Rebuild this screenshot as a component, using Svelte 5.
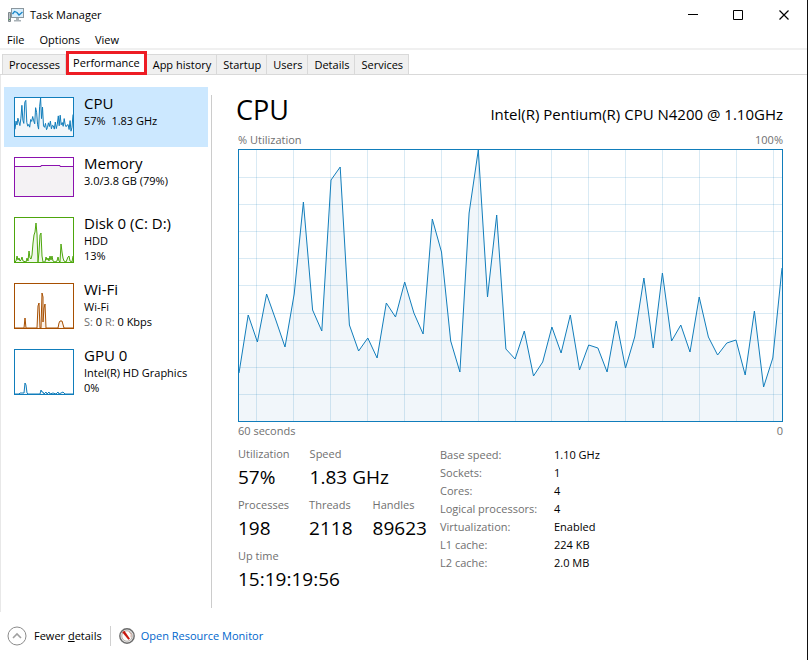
<script>
  let activeTab = 'Performance';
  let activeResource = 'CPU';

  const menus = ['File', 'Options', 'View'];
  const tabs = ['Processes', 'Performance', 'App history', 'Startup', 'Users', 'Details', 'Services'];

  // chart space is 543 x 271, one sample per second, y grows downwards
  const chartWidth = 543;
  const chartHeight = 271;
  const cpuSamples = [
    223, 165, 192, 144, 170, 197, 144, 52, 160, 181, 30, 17, 175, 201, 188,
    208, 153, 167, 132, 163, 184, 69, 102, 191, 222, 63, 0, 147, 65, 199,
    209, 181, 226, 212, 177, 203, 165, 220, 195, 198, 222, 171, 218, 187, 128,
    198, 123, 191, 175, 202, 147, 187, 205, 193, 190, 225, 161, 237, 208, 118
  ];
  const columns = [17, 54, 91, 128, 165, 202, 239, 276, 312, 349, 386, 423, 460, 497, 534];
  const rows = [27, 54, 81, 108, 135, 163, 190, 217, 244];

  const toPoints = (samples, width, height) =>
    samples
      .map((y, i) => `${((i * width) / (samples.length - 1)).toFixed(1)},${((y * height) / chartHeight).toFixed(1)}`)
      .join(' ');

  const cpuLine = toPoints(cpuSamples, chartWidth, chartHeight);

  const resources = [
    {
      name: 'CPU',
      lines: ['57%  1.83 GHz'],
      color: '#117dbb',
      fill: '#f1f6fa',
      height: 38,
      points: toPoints(cpuSamples, 58, 38)
    },
    {
      name: 'Memory',
      lines: ['3.0/3.8 GB (79%)'],
      color: '#8b12ae',
      fill: '#f4f2f4',
      height: 38,
      points: '0,8.5 26,8.5 26,7.5 45,7.5 45,8.5 58,8.5'
    },
    {
      name: 'Disk 0 (C: D:)',
      lines: ['HDD', '13%'],
      color: '#4da60c',
      fill: '#eff7e9',
      height: 44,
      points:
        '0,44 1,43 2,38 3,42 4,40 5,43 6,42 7,39 8,43 11,44 12,40 13,43 14,33 15,40 16,41 17,37 18,25 19,17 20,14 21,5 22,16 23,44 24,34 25,17 26,15 27,38 28,44 30,44 31,39 32,42 33,40 34,43 35,38 36,42 37,38 38,43 40,44 42,43 43,39 44,43 45,44 46,26 47,34 48,40 49,43 51,44 53,39 54,38 55,43 57,44 58,38'
    },
    {
      name: 'Wi-Fi',
      lines: ['Wi-Fi'],
      rates: true,
      color: '#a74f01',
      fill: '#fcf3eb',
      height: 44,
      points:
        '0,44 9,44 10,34 11,44 22,44 23,22 24,19 25,44 26,44 27,9 28,13 28,38 29,24 30,20 31,44 43,44 44,39 45,37 47,37 49,44 58,44'
    },
    {
      name: 'GPU 0',
      lines: ['Intel(R) HD Graphics', '0%'],
      color: '#117dbb',
      fill: '#f1f6fa',
      height: 44,
      points:
        '0,44 4,44 5,43 9,43 10,33 11,35 12,43 13,44 25,44 26,40 27,42 28,42 29,44 31,42 32,44 34,42 35,44 38,43 41,44 43,42 44,44 48,42 50,44 58,44'
    }
  ];

  const stats = [
    [
      { label: 'Utilization', value: '57%' },
      { label: 'Speed', value: '1.83 GHz' }
    ],
    [
      { label: 'Processes', value: '198' },
      { label: 'Threads', value: '2118' },
      { label: 'Handles', value: '89623' }
    ],
    [{ label: 'Up time', value: '15:19:19:56' }]
  ];

  const specs = [
    ['Base speed:', '1.10 GHz'],
    ['Sockets:', '1'],
    ['Cores:', '4'],
    ['Logical processors:', '4'],
    ['Virtualization:', 'Enabled'],
    ['L1 cache:', '224 KB'],
    ['L2 cache:', '2.0 MB']
  ];
</script>

<div class="window">
  <header class="titlebar">
    <svg class="app-icon" width="16" height="16" viewBox="0 0 16 16" aria-hidden="true">
      <path d="M0.5 5.5h2v9h-2z" fill="#b9c0c4" stroke="#7d878c" />
      <path d="M1 12.5h1" stroke="#3fae3f" />
      <rect x="3.5" y="1.5" width="12" height="9" fill="#d9eefb" stroke="#8b979e" />
      <path d="M4.5 7l2-2.5 2.5 1 2 2.5 3.5-3" fill="none" stroke="#1b86c7" stroke-width="1.3" />
      <path d="M8 11h3v2h2v1.5H6V13h2z" fill="#a9b2b7" />
    </svg>
    <span class="title">Task Manager</span>
    <div class="controls">
      <button aria-label="Minimize">
        <svg width="11" height="11" viewBox="0 0 11 11"><path d="M1 4.5h10" stroke="#000" /></svg>
      </button>
      <button aria-label="Maximize">
        <svg width="11" height="11" viewBox="0 0 11 11"><path d="M.5.5h9v9h-9z" fill="none" stroke="#000" /></svg>
      </button>
      <button aria-label="Close">
        <svg width="11" height="11" viewBox="0 0 11 11"><path d="M.5.5l9 9M9.5.5l-9 9" stroke="#000" stroke-width="1.2" /></svg>
      </button>
    </div>
  </header>

  <nav class="menubar">
    {#each menus as menu}
      <button>{menu}</button>
    {/each}
  </nav>

  <div class="tabs" role="tablist">
    {#each tabs as tab}
      <button
        class="tab"
        class:active={activeTab === tab}
        role="tab"
        aria-selected={activeTab === tab}
        on:click={() => (activeTab = tab)}
      >
        {tab}
      </button>
    {/each}
  </div>

  <main class="content">
    <aside class="sidebar">
      {#each resources as resource}
        <button
          class="resource"
          class:selected={activeResource === resource.name}
          on:click={() => (activeResource = resource.name)}
        >
          <svg
            class="thumb"
            width="60"
            height={resource.height + 2}
            viewBox="-1 -1 60 {resource.height + 2}"
            aria-hidden="true"
          >
            <rect x="-0.5" y="-0.5" width="59" height={resource.height + 1} fill="#fff" />
            <polygon points="0,{resource.height} {resource.points} 58,{resource.height}" fill={resource.fill} />
            <polyline points={resource.points} fill="none" stroke={resource.color} />
            <rect x="-0.5" y="-0.5" width="59" height={resource.height + 1} fill="none" stroke={resource.color} />
          </svg>
          <span class="info">
            <span class="name">{resource.name}</span>
            {#each resource.lines as line}
              <span class="line">{line}</span>
            {/each}
            {#if resource.rates}
              <span class="line"><i>S:</i> 0 <i>R:</i> 0 Kbps</span>
            {/if}
          </span>
        </button>
      {/each}
    </aside>

    <section class="details">
      <div class="heading">
        <h1>CPU</h1>
        <span class="model">Intel(R) Pentium(R) CPU N4200 @ 1.10GHz</span>
      </div>
      <div class="scale top">
        <span>% Utilization</span>
        <span>100%</span>
      </div>
      <svg
        class="chart"
        viewBox="0 0 {chartWidth} {chartHeight}"
        preserveAspectRatio="none"
        role="img"
        aria-label="CPU utilization over 60 seconds"
      >
        <polygon class="area" points="0,{chartHeight} {cpuLine} {chartWidth},{chartHeight}" />
        {#each columns as x}
          <line class="grid" x1={x + 0.5} x2={x + 0.5} y1="0" y2={chartHeight} />
        {/each}
        {#each rows as y}
          <line class="grid" x1="0" x2={chartWidth} y1={y + 0.5} y2={y + 0.5} />
        {/each}
        <polyline class="plot" points={cpuLine} />
      </svg>
      <div class="scale bottom">
        <span>60 seconds</span>
        <span>0</span>
      </div>

      <div class="numbers">
        <div class="stats">
          {#each stats as row}
            <div class="stat-row">
              {#each row as stat}
                <div class="stat">
                  <span class="label">{stat.label}</span>
                  <span class="value">{stat.value}</span>
                </div>
              {/each}
            </div>
          {/each}
        </div>
        <table class="specs">
          <tbody>
            {#each specs as [label, value]}
              <tr>
                <th scope="row">{label}</th>
                <td>{value}</td>
              </tr>
            {/each}
          </tbody>
        </table>
      </div>
    </section>
  </main>

  <footer class="footer">
    <button class="fewer">
      <svg width="20" height="20" viewBox="0 0 20 20" aria-hidden="true">
        <circle cx="10" cy="10" r="9" fill="#fff" stroke="#8c8c8c" />
        <path d="M6 12l4-4 4 4" fill="none" stroke="#a0a0a0" stroke-width="1.6" />
      </svg>
      <span>Fewer <u>d</u>etails</span>
    </button>
    <a class="monitor" href="#resource-monitor">
      <svg width="16" height="16" viewBox="0 0 16 16" aria-hidden="true">
        <circle cx="8" cy="8" r="7.2" fill="#e8e8e8" stroke="#6b6b6b" stroke-width="1.4" />
        <circle cx="8" cy="8" r="5.2" fill="#fdfdfd" stroke="#a9a29c" stroke-width="0.8" />
        <path d="M10 3.8a4.500 4.500 0 0 1 2 5.500" fill="none" stroke="#cfa79c" />
        <path d="M3.200 4.200l2.200-1.400 5.600 8-1.600 1z" fill="#c8190f" />
      </svg>
      <span>Open Resource Monitor</span>
    </a>
  </footer>
</div>

<style>
  :global(body) {
    margin: 0;
    background: #fff;
  }

  .window {
    display: flex;
    flex-direction: column;
    box-sizing: border-box;
    min-height: 100vh;
    border-right: 1px solid #111;
    background: #fff;
    color: #000;
    font-family: 'Segoe UI', 'Open Sans', 'Noto Sans', sans-serif;
    font-size: 11px;
    line-height: 16px;
  }

  button {
    margin: 0;
    padding: 0;
    border: 0;
    background: none;
    color: inherit;
    font: inherit;
    text-align: left;
  }

  svg {
    display: block;
    flex: none;
  }

  /* Title bar and menu */
  .titlebar {
    display: flex;
    align-items: center;
    height: 30px;
    padding-left: 8px;
  }

  .title {
    margin-left: 6px;
  }

  .controls {
    display: flex;
    margin-left: auto;
  }

  .controls button {
    display: flex;
    align-items: center;
    justify-content: center;
    width: 46px;
    height: 28px;
  }

  .menubar {
    display: flex;
    gap: 15px;
    height: 18px;
    padding-left: 7px;
    border-bottom: 2px solid #f0f0f0;
  }

  .menubar button {
    height: 20px;
  }

  /* Tabs */
  .tabs {
    display: flex;
    align-items: flex-end;
    height: 24px;
    padding-left: 2px;
    border-bottom: 1px solid #d9d9d9;
  }

  .tab {
    height: 20px;
    padding: 0 5px 0 6px;
    border: 1px solid #d9d9d9;
    border-width: 1px 1px 0 0;
    background: #f0f0f0;
    white-space: nowrap;
  }

  .tab:first-child {
    border-left-width: 1px;
  }

  .tab.active {
    position: relative;
    z-index: 1;
    height: 24px;
    margin-bottom: -1px;
    padding: 0 4px;
    border: 3px solid #ed1c24;
    background: #fff;
  }

  /* Resource list */
  .content {
    display: flex;
    flex: 1;
    padding: 12px 24px 4px 3px;
    border-left: 1px solid #e8e8e8;
  }

  .sidebar {
    flex: none;
    width: 204px;
  }

  .resource {
    display: flex;
    box-sizing: border-box;
    width: 100%;
    padding: 10px;
  }

  .resource.selected {
    background: #cce8ff;
  }

  .info {
    display: flex;
    flex-direction: column;
    height: 40px;
    margin-left: 10px;
    white-space: pre;
  }

  .name {
    margin-top: -4px;
    font-size: 15px;
    line-height: 20px;
  }

  .line {
    line-height: 15px;
  }

  .line i {
    color: #707070;
    font-style: normal;
  }

  /* Details */
  .details {
    flex: 1;
    min-width: 0;
    margin: 8px 0 0 3px;
    padding-left: 26px;
    border-left: 1px solid #ccc;
  }

  .heading {
    display: flex;
    align-items: baseline;
    justify-content: space-between;
    height: 37px;
  }

  h1 {
    margin: 0 0 0 -2px;
    font-size: 27px;
    font-weight: 400;
    line-height: 30px;
  }

  .model {
    font-size: 15px;
    white-space: nowrap;
  }

  .scale {
    display: flex;
    justify-content: space-between;
    color: #707070;
  }

  .scale.top {
    margin-bottom: 1px;
  }

  .scale.bottom {
    margin-top: 1px;
  }

  .chart {
    box-sizing: border-box;
    width: 100%;
    height: 273px;
    border: 1px solid #117dbb;
  }

  .area {
    fill: #f1f6fa;
  }

  .grid {
    stroke: #117dbb;
    stroke-opacity: 0.16;
    vector-effect: non-scaling-stroke;
    shape-rendering: crispEdges;
  }

  .plot {
    fill: none;
    stroke: #117dbb;
    vector-effect: non-scaling-stroke;
  }

  .numbers {
    display: flex;
    margin-top: 7px;
  }

  .stats {
    flex: none;
    width: 202px;
  }

  .stat-row {
    display: flex;
    gap: 20px;
    height: 51px;
  }

  .stat {
    display: flex;
    flex-direction: column;
  }

  .label {
    color: #707070;
  }

  .value {
    font-size: 19px;
    line-height: 30px;
  }

  .specs {
    align-self: flex-start;
    border-collapse: collapse;
  }

  .specs th,
  .specs td {
    height: 18px;
    padding: 0;
    font-weight: 400;
    line-height: 18px;
    text-align: left;
    white-space: nowrap;
  }

  .specs th {
    width: 114px;
    color: #707070;
  }

  /* Footer */
  .footer {
    display: flex;
    align-items: center;
    height: 48px;
    padding-left: 7px;
  }

  .fewer,
  .monitor {
    display: flex;
    align-items: center;
    gap: 6px;
  }

  .fewer {
    gap: 7px;
    padding-right: 8px;
    border-right: 1px solid #d0d0d0;
  }

  .monitor {
    margin-left: 8px;
    color: #0066cc;
    text-decoration: none;
  }
</style>
